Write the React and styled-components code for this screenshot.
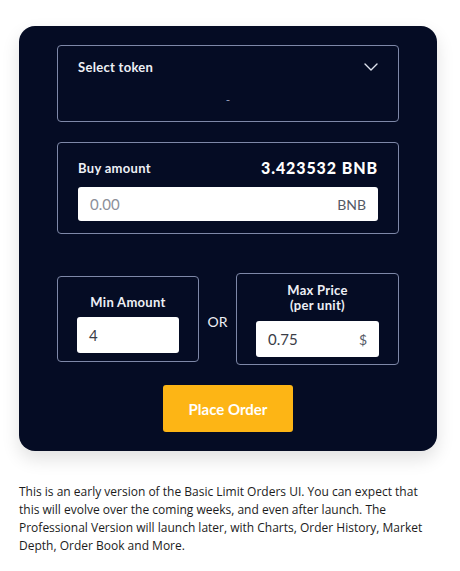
import styled, { createGlobalStyle } from "styled-components";

const GlobalStyle = createGlobalStyle`
    html, body {
        margin: 0;
        padding: 0;
        background: #ffffff;
    }
    body {
        font-family: "Open Sans", "Liberation Sans", sans-serif;
    }
`;

const Page = styled.div`
    width: 460px;
    padding: 26px 23px 0 19px;
    box-sizing: border-box;
`;

const Card = styled.section`
    background: #050c24;
    border-radius: 16px;
    padding: 19px 38px 19px;
    display: flex;
    flex-direction: column;
    box-shadow: 0 8px 18px rgba(0, 0, 0, 0.12);
    font-family: "Lato", "Liberation Sans", sans-serif;
    color: #ffffff;
`;

const Box = styled.div`
    border: 1px solid #7e88a8;
    border-radius: 4px;
    box-sizing: border-box;
    padding: ${(p) => p.$pad || "0 20px"};
    width: ${(p) => p.$w || "auto"};
    height: ${(p) => p.$h};
    display: flex;
    flex-direction: column;
`;

const HeadRow = styled.div`
    display: flex;
    justify-content: space-between;
    align-items: center;
`;

const Label = styled.span`
    font-size: ${(p) => p.$size || "13px"};
    font-weight: 700;
    letter-spacing: 0.3px;
    color: #eef0f6;
    text-align: ${(p) => p.$center ? "center" : "left"};
    line-height: ${(p) => p.$lh || "normal"};
`;

const Balance = styled.span`
    font-size: 16px;
    font-weight: 900;
    letter-spacing: 0.9px;
`;

const Dash = styled.div`
    text-align: center;
    color: #9aa2bb;
    font-size: 12px;
    margin-top: 17px;
`;

const Field = styled.div`
    background: #ffffff;
    border-radius: 3px;
    height: ${(p) => p.$h || "34px"};
    display: flex;
    align-items: center;
    justify-content: space-between;
    padding: 0 12px;
    font-size: 15px;
    color: ${(p) => p.$muted ? "#8c8f99" : "#3a3d47"};
`;

const Unit = styled.span`
    color: #555a66;
    font-size: 14px;
`;

const Row = styled.div`
    display: flex;
    align-items: center;
    margin-top: 39px;
`;

const Or = styled.span`
    flex: 1;
    text-align: center;
    font-size: 14px;
    color: #eef0f6;
    padding-top: 4px;
`;

const Button = styled.button`
    align-self: center;
    margin-top: 20px;
    width: 130px;
    height: 47px;
    border: none;
    border-radius: 3px;
    background: #fdb515;
    color: #ffffff;
    font-family: "Lato", "Liberation Sans", sans-serif;
    font-size: 15px;
    font-weight: 700;
`;

const Note = styled.p`
    margin: 32px 0 0;
    width: 405px;
    font-size: 12px;
    line-height: 18px;
    color: #1c1c1c;
`;

function Chevron() {
    return (
        <svg width="14" height="8" viewBox="0 0 14 8" fill="none">
            <path d="M1 1l6 6 6-6" stroke="#dfe3ee" strokeWidth="1.4" strokeLinecap="round" strokeLinejoin="round" />
        </svg>
    );
}

export default function App() {
    return (
        <Page>
            <GlobalStyle />
            <Card>
                <Box $h="77px" $pad="13px 20px 0">
                    <HeadRow>
                        <Label>Select token</Label>
                        <Chevron />
                    </HeadRow>
                    <Dash>-</Dash>
                </Box>

                <Box $h="92px" $pad="15px 20px 0" style={{ marginTop: 20 }}>
                    <HeadRow>
                        <Label>Buy amount</Label>
                        <Balance>3.423532 BNB</Balance>
                    </HeadRow>
                    <Field $muted style={{ marginTop: 10 }}>
                        0.00
                        <Unit>BNB</Unit>
                    </Field>
                </Box>

                <Row>
                    <Box $w="142px" $h="86px" $pad="17px 19px 0">
                        <Label $center>Min Amount</Label>
                        <Field $h="36px" style={{ marginTop: 7 }}>4</Field>
                    </Box>
                    <Or>OR</Or>
                    <Box $w="163px" $h="92px" $pad="9px 19px 0">
                        <Label $center $lh="15px">
                            Max Price
                            <br />
                            (per unit)
                        </Label>
                        <Field $h="36px" style={{ marginTop: 8 }}>
                            0.75
                            <Unit>$</Unit>
                        </Field>
                    </Box>
                </Row>

                <Button>Place Order</Button>
            </Card>
            <Note>
                This is an early version of the Basic Limit Orders UI. You can expect that this will
                evolve over the coming weeks, and even after launch. The Professional Version will
                launch later, with Charts, Order History, Market Depth, Order Book and More.
            </Note>
        </Page>
    );
}
